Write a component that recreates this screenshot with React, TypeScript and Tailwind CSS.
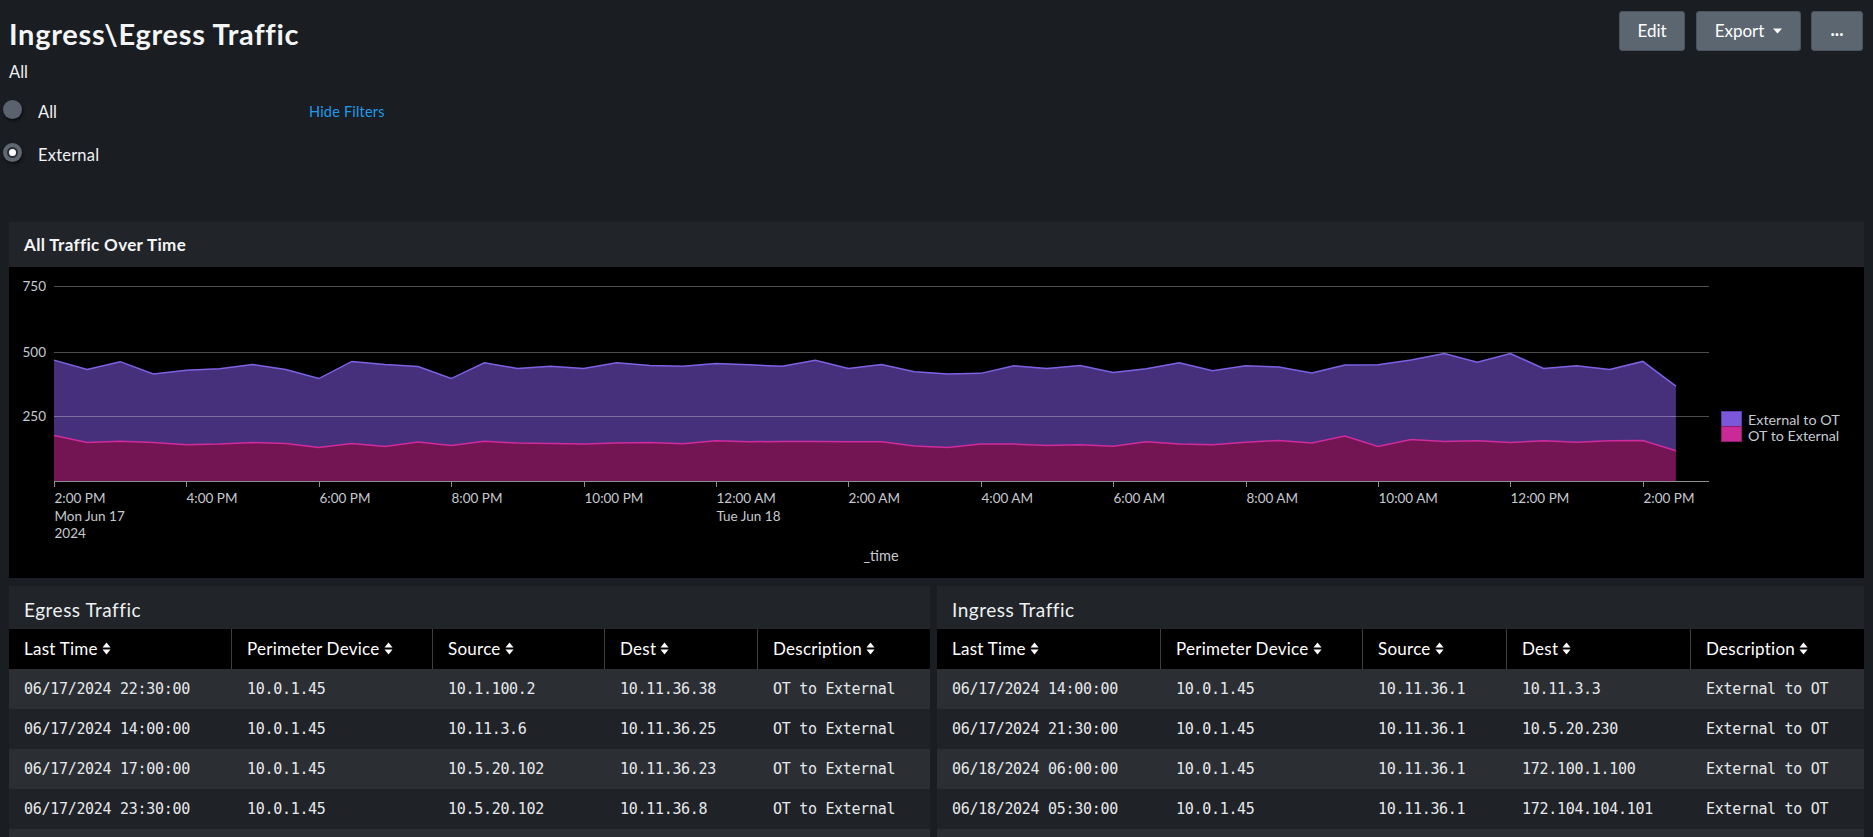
import React from 'react'

const TOTAL = [
  465, 429, 459, 412, 426, 432, 448, 429, 394, 460, 448, 440, 394, 455, 433, 441, 433,
  455, 444, 441, 452, 447, 441, 464, 433, 448, 420, 412, 414, 443, 433, 444, 417, 432,
  455, 424, 443, 438, 415, 446, 447, 465, 490, 457, 490, 433, 443, 429, 460, 365,
]
const BOTTOM = [
  175, 148, 153, 148, 139, 142, 148, 144, 129, 144, 133, 150, 137, 153, 146, 144, 142,
  146, 148, 143, 155, 151, 152, 152, 151, 151, 135, 129, 142, 142, 137, 139, 134, 151,
  142, 139, 149, 156, 146, 173, 133, 160, 152, 155, 148, 155, 149, 155, 156, 116,
]

const X0 = 45
const STEP = 33.1
const BASE = 214
const K = 195 / 750
const px = (i: number) => X0 + i * STEP
const py = (v: number) => BASE - v * K

const TICKS = [
  ['2:00 PM', 'Mon Jun 17', '2024'],
  ['4:00 PM'],
  ['6:00 PM'],
  ['8:00 PM'],
  ['10:00 PM'],
  ['12:00 AM', 'Tue Jun 18'],
  ['2:00 AM'],
  ['4:00 AM'],
  ['6:00 AM'],
  ['8:00 AM'],
  ['10:00 AM'],
  ['12:00 PM'],
  ['2:00 PM'],
]

const EGRESS = [
  ['06/17/2024 22:30:00', '10.0.1.45', '10.1.100.2', '10.11.36.38', 'OT to External'],
  ['06/17/2024 14:00:00', '10.0.1.45', '10.11.3.6', '10.11.36.25', 'OT to External'],
  ['06/17/2024 17:00:00', '10.0.1.45', '10.5.20.102', '10.11.36.23', 'OT to External'],
  ['06/17/2024 23:30:00', '10.0.1.45', '10.5.20.102', '10.11.36.8', 'OT to External'],
]
const INGRESS = [
  ['06/17/2024 14:00:00', '10.0.1.45', '10.11.36.1', '10.11.3.3', 'External to OT'],
  ['06/17/2024 21:30:00', '10.0.1.45', '10.11.36.1', '10.5.20.230', 'External to OT'],
  ['06/18/2024 06:00:00', '10.0.1.45', '10.11.36.1', '172.100.1.100', 'External to OT'],
  ['06/18/2024 05:30:00', '10.0.1.45', '10.11.36.1', '172.104.104.101', 'External to OT'],
]
const HEADERS = ['Last Time', 'Perimeter Device', 'Source', 'Dest', 'Description']

function SortIcon() {
  return (
    <svg width="9" height="13" viewBox="0 0 9 13" className="ml-[4px] shrink-0">
      <path d="M0.5 5.5L4.5 0.5L8.5 5.5Z" fill="white" />
      <path d="M0.5 7.5L4.5 12.5L8.5 7.5Z" fill="white" />
    </svg>
  )
}

function TrafficChart() {
  const top = TOTAL.map((v, i) => `${px(i)},${py(v)}`)
  const bot = BOTTOM.map((v, i) => `${px(i)},${py(v)}`)
  const last = px(TOTAL.length - 1)
  const purple = [...top, ...bot.slice().reverse()].join(' ')
  const magenta = [...bot, `${last},${BASE}`, `${X0},${BASE}`].join(' ')

  return (
    <svg width="1855" height="311" viewBox="0 0 1855 311" className="block">
      <polygon points={purple} fill="#46307c" />
      <polygon points={magenta} fill="#721552" />
      <polyline points={top.join(' ')} fill="none" stroke="#7f62e4" strokeWidth="1.5" />
      <polyline points={bot.join(' ')} fill="none" stroke="#d02b9d" strokeWidth="1.5" />

      {[19, 85, 149].map((y) => (
        <line key={y} x1={X0} x2={1700} y1={y + 0.5} y2={y + 0.5} stroke="white" strokeOpacity="0.3" />
      ))}
      <line x1={X0} x2={1700} y1={BASE + 0.5} y2={BASE + 0.5} stroke="#8d8f93" />

      <g fill="#c5cad0" fontFamily="Lato, sans-serif" fontSize="13.5">
        <text x="37" y="24" textAnchor="end">750</text>
        <text x="37" y="90" textAnchor="end">500</text>
        <text x="37" y="154" textAnchor="end">250</text>

        {TICKS.map((lines, k) => {
          const x = Math.round(X0 + k * 132.4) + 0.5
          return (
            <g key={k}>
              <line x1={x} x2={x} y1={BASE} y2={BASE + 6} stroke="#8d8f93" />
              {lines.map((t, j) => (
                <text key={j} x={x} y={236 + j * 17.5}>
                  {t}
                </text>
              ))}
            </g>
          )
        })}

        <text x="872" y="294" textAnchor="middle" fontSize="14.5">_time</text>

        <rect x="1712.5" y="144.5" width="20" height="15" fill="#7b57d9" stroke="#5a3fa8" />
        <rect x="1712.5" y="159.5" width="20" height="15" fill="#c92a98" stroke="#8f1b6c" />
        <text x="1739" y="158" fontSize="14.3">External to OT</text>
        <text x="1739" y="174" fontSize="14.3">OT to External</text>
      </g>
    </svg>
  )
}

function TrafficTable({ title, rows, widths }: { title: string; rows: string[][]; widths: number[] }) {
  return (
    <div className="flex flex-col">
      <div className="flex h-[43px] items-center bg-[#212428] px-[15px] pt-[5px] text-[19px] leading-[22px] tracking-[0.5px] text-[#eef0f2]">
        {title}
      </div>
      <div className="flex h-[40px] bg-black">
        {HEADERS.map((h, i) => (
          <div
            key={h}
            style={{ width: widths[i] }}
            className={`flex shrink-0 items-center px-[15px] pb-[1px] text-[17px] tracking-[0.25px] text-white ${i > 0 ? 'border-l border-[#3a3f45]' : ''}`}
          >
            {h}
            <SortIcon />
          </div>
        ))}
      </div>
      {[...rows, null].map((r, ri) => (
        <div key={ri} className={`flex h-[40px] ${ri % 2 === 0 ? 'bg-[#2b2f33]' : 'bg-[#1f2226]'}`}>
          {r &&
            r.map((c, ci) => (
              <div
                key={ci}
                style={{ width: widths[ci] }}
                className={`flex shrink-0 items-center whitespace-nowrap px-[15px] font-['DejaVu_Sans_Mono',monospace] text-[15px] tracking-[-0.3px] text-[#e6e9ec] ${ci > 0 ? 'pl-[16px]' : ''}`}
              >
                {c}
              </div>
            ))}
        </div>
      ))}
    </div>
  )
}

export default function App() {
  return (
    <div className="h-[837px] w-[1873px] overflow-hidden bg-[#1a1d21] font-['Lato',sans-serif] text-white">
      <div className="flex justify-between">
        <div className="flex flex-col">
          <h1 className="ml-[9px] mt-[17px] text-[29px] font-bold leading-[34px] tracking-[0.7px] text-[#f4f5f6]">
            {'Ingress\\Egress Traffic'}
          </h1>
          <div className="ml-[9px] mt-[11px] text-[16.5px] leading-[20px] text-[#eef0f2]">All</div>
          <div className="mt-[9px] flex">
            <div className="flex w-[309px] flex-col pl-[3px]">
              <div className="flex h-[43px] items-center">
                <span className="mb-[6px] h-[19px] w-[19px] rounded-full bg-[#5a6270] shadow-[1px_2px_3px_rgba(0,0,0,0.55)]" />
                <span className="ml-[16px] text-[16.5px] text-[#f0f2f4]">All</span>
              </div>
              <div className="flex h-[43px] items-center">
                <span className="mb-[6px] flex h-[19px] w-[19px] items-center justify-center rounded-full bg-[#5f6773] shadow-[1px_2px_3px_rgba(0,0,0,0.55)]">
                  <span className="h-[11px] w-[11px] rounded-full border-2 border-[#2a2f35] bg-white" />
                </span>
                <span className="ml-[16px] text-[16.5px] tracking-[0.2px] text-[#f0f2f4]">External</span>
              </div>
            </div>
            <div className="flex h-[42px] items-center text-[14.5px] tracking-[0.2px] text-[#1f9aef]">Hide Filters</div>
          </div>
        </div>
        <div className="mr-[10px] mt-[11px] flex gap-[10px]">
          <button className="h-[40px] w-[66px] rounded-[3px] border border-[#4a535d] bg-[#5c6670] text-[17px] text-white">
            Edit
          </button>
          <button className="ml-[1px] flex h-[40px] w-[105px] items-center justify-center rounded-[3px] border border-[#4a535d] bg-[#5c6670] text-[17px] text-white">
            Export
            <svg width="9" height="6" viewBox="0 0 9 6" className="ml-[9px]">
              <path d="M0 0.5H9L4.5 5.5Z" fill="white" />
            </svg>
          </button>
          <button className="h-[40px] w-[52px] rounded-[3px] border border-[#4a535d] bg-[#5c6670] pb-[4px] text-[18px] font-bold text-white">
            ...
          </button>
        </div>
      </div>

      <div className="mx-[9px] mt-[45px]">
        <div className="flex h-[45px] items-center bg-[#212428] px-[15px] text-[17px] font-bold leading-[20px] tracking-[0.35px] text-[#f4f5f6]">
          All Traffic Over Time
        </div>
        <div className="h-[311px] bg-black">
          <TrafficChart />
        </div>
      </div>

      <div className="mx-[9px] mt-[8px] flex gap-[7px]">
        <div className="w-[921px] shrink-0">
          <TrafficTable title="Egress Traffic" rows={EGRESS} widths={[222, 201, 172, 153, 173]} />
        </div>
        <div className="flex-1">
          <TrafficTable title="Ingress Traffic" rows={INGRESS} widths={[223, 202, 144, 184, 174]} />
        </div>
      </div>
    </div>
  )
}
